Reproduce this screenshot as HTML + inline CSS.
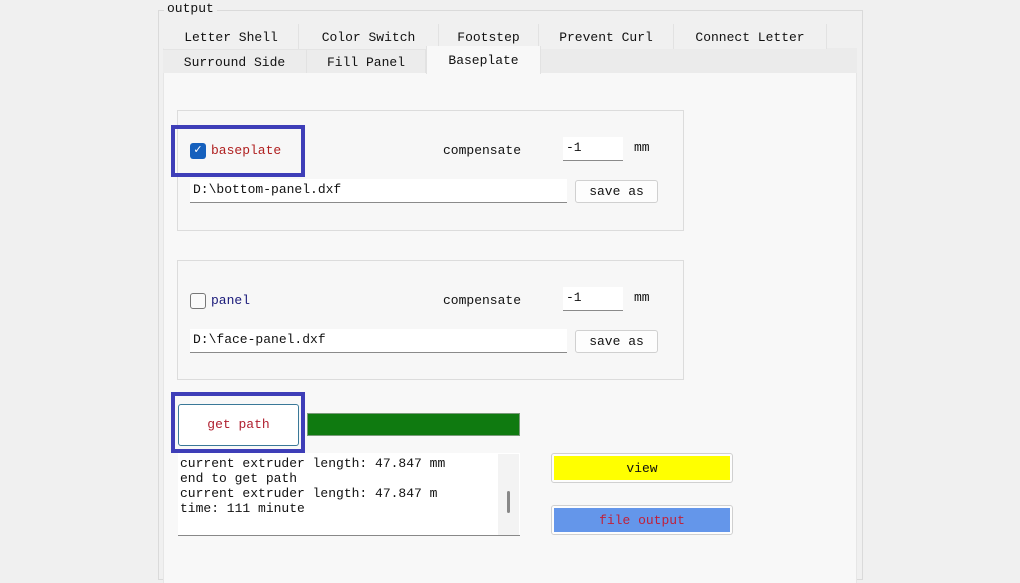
<!DOCTYPE html><html><head><style>
*{margin:0;padding:0;box-sizing:border-box}
body{width:1020px;height:574px;background:#f0f0f0;position:relative;overflow:hidden;font-family:"Liberation Mono",monospace;font-size:13px;color:#111}
.a{position:absolute}
.tab{position:absolute;background:#f0f0f0;border-right:1px solid #e2e2e2;text-align:center;line-height:25px;height:25px}
.inp{position:absolute;background:#fff;border-bottom:1px solid #8a8a8a;padding-left:3px;line-height:22px}
.btn{position:absolute;background:#fdfdfd;border:1px solid #d0d0d0;border-radius:3px;text-align:center}
.frame{position:absolute;border:1px solid #dcdcdc;background:#f7f7f7}
.hl{position:absolute;border:4px solid #3e3eb8}
</style></head><body>
<div class="a" style="left:158px;top:10px;width:705px;height:570px;border:1px solid #dadada"></div>
<div class="a" style="left:164px;top:0;background:#f0f0f0;padding:0 3px;line-height:18px">output</div>
<div class="a" style="left:163px;top:48px;width:694px;height:26px;background:#ebebeb"></div>
<div class="tab" style="left:164px;top:24px;width:135px;line-height:28px">Letter Shell</div>
<div class="tab" style="left:299px;top:24px;width:140px;line-height:28px">Color Switch</div>
<div class="tab" style="left:439px;top:24px;width:100px;line-height:28px">Footstep</div>
<div class="tab" style="left:539px;top:24px;width:135px;line-height:28px">Prevent Curl</div>
<div class="tab" style="left:674px;top:24px;width:153px;line-height:28px">Connect Letter</div>
<div class="tab" style="left:163px;top:49px;width:144px;background:#ececec;border-top:1px solid #e4e4e4">Surround Side</div>
<div class="tab" style="left:307px;top:49px;width:119px;background:#ececec;border-top:1px solid #e4e4e4">Fill Panel</div>
<div class="a" style="left:163px;top:73px;width:694px;height:510px;background:#f8f8f8;border-left:1px solid #e6e6e6;border-right:1px solid #e6e6e6"></div>
<div class="tab" style="left:426px;top:46px;width:115px;height:28px;background:#f8f8f8;line-height:30px;border-right:1px solid #e2e2e2;border-left:1px solid #e2e2e2">Baseplate</div>

<div class="frame" style="left:177px;top:110px;width:507px;height:121px"></div>
<div class="a" style="left:190px;top:143px;width:16px;height:16px;background:#1560bd;border-radius:3px;color:#fff;font-size:11px;line-height:16px;text-align:center">✓</div>
<div class="a" style="left:211px;top:142px;color:#b02020;line-height:18px">baseplate</div>
<div class="a" style="left:443px;top:142px;line-height:18px">compensate</div>
<div class="inp" style="left:563px;top:137px;width:60px;height:24px">-1</div>
<div class="a" style="left:634px;top:139px;line-height:18px">mm</div>
<div class="inp" style="left:190px;top:179px;width:377px;height:24px">D:\bottom-panel.dxf</div>
<div class="btn" style="left:575px;top:180px;width:83px;height:23px;line-height:22px">save as</div>
<div class="hl" style="left:171px;top:125px;width:134px;height:52px"></div>

<div class="frame" style="left:177px;top:260px;width:507px;height:120px"></div>
<div class="a" style="left:190px;top:293px;width:16px;height:16px;background:#fafafa;border:1px solid #777;border-radius:3px"></div>
<div class="a" style="left:211px;top:292px;color:#1a1a7a;line-height:18px">panel</div>
<div class="a" style="left:443px;top:292px;line-height:18px">compensate</div>
<div class="inp" style="left:563px;top:287px;width:60px;height:24px">-1</div>
<div class="a" style="left:634px;top:289px;line-height:18px">mm</div>
<div class="inp" style="left:190px;top:329px;width:377px;height:24px">D:\face-panel.dxf</div>
<div class="btn" style="left:575px;top:330px;width:83px;height:23px;line-height:22px">save as</div>

<div class="btn" style="left:178px;top:404px;width:121px;height:42px;line-height:40px;border-color:#3a7898;color:#b02030;background:#fff">get path</div>
<div class="hl" style="left:171px;top:392px;width:134px;height:61px"></div>
<div class="a" style="left:307px;top:413px;width:213px;height:23px;background:#0f7a10;border:1px solid #7a9a7a"></div>

<div class="a" style="left:178px;top:453px;width:342px;height:83px;background:#fff;border-bottom:1px solid #888;padding:3px 0 0 2px;line-height:15px;white-space:pre">current extruder length: 47.847 mm
end to get path
current extruder length: 47.847 m
time: 111 minute</div>
<div class="a" style="left:498px;top:454px;width:21px;height:81px;background:#f3f3f3"></div>
<div class="a" style="left:507px;top:491px;width:3px;height:22px;background:#888;border-radius:2px"></div>

<div class="btn" style="left:551px;top:453px;width:182px;height:30px;padding:2px"><div style="background:#ffff00;height:24px;line-height:26px">view</div></div>
<div class="btn" style="left:551px;top:505px;width:182px;height:30px;padding:2px"><div style="background:#6496ea;height:24px;line-height:26px;color:#c0203a">file output</div></div>
</body></html>
